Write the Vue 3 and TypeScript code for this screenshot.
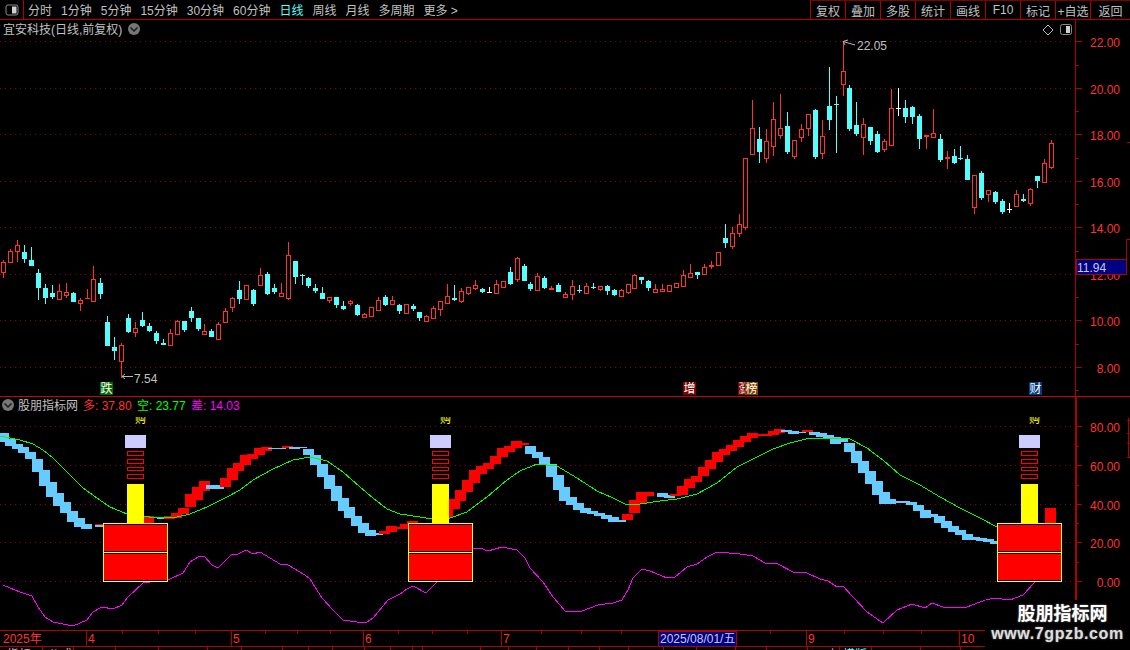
<script setup lang="ts">
type Candle = [string, number, number, number, number];
type BandRow = [number, number, number, string];

const periods = ['分时', '1分钟', '5分钟', '15分钟', '30分钟', '60分钟', '日线', '周线', '月线', '多周期', '更多 >'];
const actions = ['复权', '叠加', '多股', '统计', '画线', 'F10', '标记', '+自选', '返回'];

const raw: Candle[] = [
  ['r',262,272,260,278],['r',251,262,249,263],['r',245,251,240,262],['c',252,259,245,263],['c',260,266,247,266],
  ['c',273,288,269,300],['c',288,298,284,304],['c',293,297,285,299],['r',291,299,284,299],['r',292,295,283,298],
  ['c',293,302,292,302],['r',300,303,298,311],['f',298,299,289,299],['r',279,301,266,301],['c',283,294,278,299],
  ['c',322,346,316,346],['c',347,351,337,360],['r',345,361,343,378],['c',318,332,314,333],['r',328,332,322,337],
  ['c',320,326,312,327],['c',326,331,323,332],['c',333,341,331,344],['c',343,345,339,345],['r',333,345,329,345],
  ['r',321,334,320,334],['c',321,330,321,332],['c',311,318,307,322],['c',318,329,318,331],['r',331,334,324,335],
  ['c',331,337,329,337],['r',324,339,322,340],['r',311,322,308,323],['r',298,307,297,312],['c',290,299,281,304],
  ['r',285,299,285,299],['c',290,304,289,306],['r',275,285,268,285],['c',274,294,272,295],['c',288,292,284,294],
  ['r',293,296,283,297],['r',255,298,242,300],['c',261,277,261,284],['d',275,275,274,285],['c',278,286,277,288],
  ['c',288,291,284,293],['c',293,299,287,299],['r',297,300,297,303],['c',297,305,297,308],['c',306,309,301,310],
  ['r',301,303,300,306],['c',305,315,304,316],['r',314,317,313,317],['r',307,316,307,316],['r',300,310,297,311],
  ['c',297,305,295,306],['r',300,304,296,304],['c',305,311,304,314],['r',304,313,304,313],['c',306,309,304,311],
  ['c',312,318,312,321],['r',316,321,315,321],['r',308,318,306,318],['r',301,309,301,316],['r',296,303,284,304],
  ['d',298,300,285,301],['r',291,301,288,303],['r',287,293,287,295],['r',285,288,280,290],['c',289,292,288,293],
  ['w',292,293,287,293],['r',284,293,280,293],['r',281,287,281,288],['c',272,284,267,285],['r',258,279,257,282],
  ['c',266,281,264,281],['c',284,289,282,291],['r',276,290,273,291],['c',278,288,276,289],['f',288,290,286,290],
  ['c',285,292,283,292],['r',294,297,292,297],['r',286,294,280,300],['d',290,291,285,293],['r',286,293,283,294],
  ['d',287,288,283,289],['r',286,289,286,291],['c',286,291,285,295],['c',290,295,289,296],['r',290,296,289,296],
  ['r',284,292,284,294],['r',275,288,274,288],['c',277,280,277,284],['c',281,288,280,291],['r',289,292,284,292],
  ['r',289,291,284,291],['r',285,291,285,291],['r',283,287,283,287],['r',275,286,270,286],['r',273,277,264,277],
  ['c',272,275,272,279],['r',267,274,264,274],['f',265,267,261,269],['r',252,265,252,266],['c',238,243,224,248],
  ['r',233,246,227,249],['r',224,233,214,237],['r',158,227,158,230],['r',128,154,100,154],['c',139,152,127,163],
  ['r',141,158,129,163],['r',119,146,102,156],['r',128,135,94,139],['c',126,152,112,154],['r',140,156,140,159],
  ['r',129,137,124,142],['r',114,128,114,136],['c',110,157,109,159],['r',136,153,120,159],['c',106,120,67,130],
  ['d',104,105,96,153],['r',71,84,43,96],['c',88,129,85,131],['c',125,134,102,136],['r',124,137,118,155],
  ['c',127,141,127,145],['c',134,152,131,153],['r',141,149,139,152],['r',108,145,89,145],['w',108,109,88,116],
  ['c',108,117,100,123],['c',107,117,106,124],['c',116,139,114,149],['f',135,137,135,149],['r',133,137,109,137],
  ['c',139,160,134,162],['f',157,159,151,169],['c',156,163,149,164],['d',158,159,146,160],['c',159,180,155,180],
  ['r',175,207,175,214],['c',173,198,171,200],['r',190,194,190,202],['c',192,202,191,204],['c',201,212,199,214],
  ['w',209,210,203,213],['r',194,206,190,207],['c',199,201,194,202],['r',189,203,188,206],['c',176,181,176,188],
  ['r',163,182,159,182],['r',143,167,140,169],
];

function cx(i: number): number {
  return Math.round(3.3 + 6.936 * i);
}

const candles = raw.map((c, i) => {
  const [kind, top, bottom, high, low] = c;
  const x = cx(i);
  const tone = kind === 'c' || kind === 'd' ? 'cy' : kind === 'w' ? 'wh' : 'rd';
  return { i, kind, x, top, bottom, high, low, tone };
});

const seqs: [number, [number, number, string][]][] = [
  [-1, [[433,442,'b'],[439,446,'b'],[444,449,'b'],[447,453,'b'],[452,459,'b'],[459,472,'b'],[470,486,'b'],[482,497,'b'],[493,506,'b'],[502,513,'b'],[511,522,'b'],[518,527,'b'],[524,529,'b']]],
  [13, [[524,527,'r']]],
  [13, [[525,527,'b']]],
  [20, [[516,523,'r']]],
  [22, [[517,519,'b'],[516,519,'r'],[513,518,'r'],[508,514,'r'],[494,507,'r'],[487,500,'r'],[481,491,'r'],[485,489,'b'],[485,489,'b'],[478,487,'r'],[468,480,'r'],[463,471,'r'],[455,465,'r'],[454,459,'r'],[448,455,'r'],[447,451,'r'],[448,449,'b'],[448,449,'b'],[446,448,'r'],[447,449,'b'],[447,448,'b'],[449,455,'b'],[455,465,'b'],[464,477,'b'],[475,489,'b'],[486,501,'b'],[498,511,'b'],[507,518,'b'],[516,526,'b'],[523,533,'b'],[530,536,'b'],[533,535,'b'],[531,534,'r'],[526,532,'r'],[527,529,'r'],[524,529,'r'],[521,525,'r']]],
  [63, [[508,518,'r'],[499,509,'r'],[490,501,'r'],[480,492,'r'],[470,483,'r'],[466,474,'r'],[463,469,'r'],[456,464,'r'],[448,457,'r'],[446,452,'r'],[441,448,'r'],[443,445,'r'],[446,454,'b'],[452,458,'b'],[457,465,'b'],[464,477,'b'],[475,490,'b'],[487,501,'b'],[497,505,'b'],[503,510,'b'],[508,513,'b'],[511,514,'b'],[513,516,'b'],[515,519,'b'],[517,522,'b'],[520,522,'b'],[514,520,'r'],[500,513,'r'],[492,504,'r'],[492,496,'r']]],
  [94, [[493,497,'b'],[495,498,'b'],[494,496,'r'],[486,495,'r'],[479,488,'r'],[476,482,'r'],[467,476,'r'],[460,469,'r'],[452,462,'r'],[449,455,'r'],[445,451,'r'],[440,447,'r'],[436,442,'r'],[433,438,'r'],[434,436,'r'],[434,436,'r'],[431,435,'r'],[429,433,'r'],[430,432,'b'],[431,434,'b'],[432,433,'b'],[430,432,'r'],[432,435,'b'],[433,437,'b'],[435,438,'b'],[437,444,'b'],[439,442,'b'],[443,452,'b'],[451,463,'b'],[461,473,'b'],[471,484,'b'],[481,495,'b'],[492,504,'b'],[499,504,'b'],[501,503,'b'],[501,503,'b'],[502,505,'b'],[505,511,'b'],[510,518,'b'],[514,517,'b'],[516,523,'b'],[521,528,'b'],[526,532,'b'],[530,535,'b'],[534,540,'b'],[537,540,'b'],[538,541,'b'],[539,542,'b'],[541,544,'b']]],
  [150, [[508,523,'r']]],
];

const bands: BandRow[] = [];
seqs.forEach(([start, rows]) => {
  rows.forEach((r, k) => bands.push([Math.round(3.3 + 6.936 * (start + k) + 1.3), r[0], r[1], r[2]]));
});

const greenLine = '0,436 10,438 20,440 33,444 43,450 53,458 63,468 73,478 83,488 97,498 110,507 127,514 157,518 177,517 190,514 207,507 227,497 240,490 253,480 273,469 293,460 310,457 327,461 343,472 360,487 373,498 387,509 400,514 420,517 432,519 450,518 467,512 487,497 507,480 520,471 537,464 557,466 577,478 597,491 613,498 627,505 640,504 660,501 677,499 697,494 717,483 737,467 757,457 773,449 790,443 810,438 830,438 850,439 867,448 883,460 900,475 920,485 940,497 960,508 980,518 997,527';
const magentaLine = '3,585 10,588 20,592 32,596 38,607 45,617 53,622 63,624 73,626 87,620 93,612 102,607 113,609 122,605 128,597 143,583 170,579 183,573 190,562 198,557 204,556 212,565 218,568 232,554 238,554 246,550 253,554 260,552 270,558 280,564 288,565 305,575 310,579 322,598 333,610 343,620 357,622 367,622 373,618 388,600 400,594 407,589 413,586 426,593 436,583 473,548 480,548 488,551 502,547 517,550 525,558 530,568 543,582 553,597 566,612 582,611 598,605 613,603 622,600 628,590 633,578 642,569 650,571 667,578 675,577 687,567 697,564 707,557 717,552 740,554 753,556 765,563 778,564 793,572 807,573 820,579 828,581 837,587 843,586 853,597 867,612 883,623 897,610 912,604 925,608 932,603 943,607 967,607 980,602 993,598 1010,600 1023,595 1035,582';

const mainGrid = [
  { y: 41.5, label: '22.00' }, { y: 88.5, label: '20.00' }, { y: 134.5, label: '18.00' }, { y: 181.5, label: '16.00' },
  { y: 227.5, label: '14.00' }, { y: 274.5, label: '12.00' }, { y: 320.5, label: '10.00' }, { y: 367.5, label: '8.00' },
];
const subGrid = [
  { y: 426.5, label: '80.00' }, { y: 465.5, label: '60.00' }, { y: 504.5, label: '40.00' }, { y: 542.5, label: '20.00' }, { y: 581.5, label: '0.00' },
];
const minorTicks = [65, 111, 158, 204, 251, 297, 344, 390, 446, 485, 523, 562];
const signals = [0, 305, 894];
const ladder = [[451, 5], [459, 5], [467, 4], [474, 5]];
const dateMarks = [{ x: 86, t: '4' }, { x: 231, t: '5' }, { x: 363, t: '6' }, { x: 501, t: '7' }, { x: 806, t: '9' }, { x: 959, t: '10' }];
const dateTicks = [122, 158, 195, 265, 297, 330, 398, 432, 467, 541, 581, 621, 770, 844, 883, 921];
const lowerTicks = [42, 73, 115, 158, 207, 241, 282, 308, 332, 364, 390, 412, 422, 480, 508, 536, 568, 599, 628, 663, 696, 735, 766, 807, 839, 871, 920, 960];
const rightTicks = [142, 239, 420, 433, 443, 457];
</script>

<template>
  <div class="terminal">
    <header class="toolbar">
      <div class="panel-toggle">
        <svg width="14" height="12" viewBox="0 0 14 12"><rect x="1" y="1" width="12" height="10" rx="2" class="ico-line" /><rect x="7" y="2.5" width="4.5" height="7" class="ico-fill" /></svg>
      </div>
      <nav class="periods">
        <span v-for="p in periods" :key="p" :class="{ active: p === '日线' }">{{ p }}</span>
      </nav>
      <nav class="actions">
        <span v-for="a in actions" :key="a">{{ a }}</span>
      </nav>
    </header>

    <svg class="chart" width="1130" height="630" viewBox="0 20 1130 630" shape-rendering="crispEdges">
      <!-- grids -->
      <line v-for="g in mainGrid" :key="g.label" x1="0" x2="1075" :y1="g.y" :y2="g.y" class="dot" />
      <line v-for="g in subGrid" :key="g.label" x1="0" x2="1075" :y1="g.y" :y2="g.y" class="dot" />

      <!-- candles -->
      <g v-for="c in candles" :key="c.i">
        <rect :x="c.x" :y="c.high" width="1" :height="Math.max(1, c.low - c.high)" :class="c.tone" />
        <rect v-if="c.kind === 'r'" :x="c.x - 1.5" :y="c.top + 0.5" width="4" :height="c.bottom - c.top" class="hollow" />
        <rect v-else :x="c.x - 2" :y="c.top" width="5" :height="Math.max(1, c.bottom - c.top)" :class="c.tone" />
      </g>

      <!-- price annotations -->
      <g class="note" shape-rendering="auto">
        <path d="M122 376.5H133M122 376.5L125 374M122 376.5L125 379" />
        <path d="M843 41.5L855 45M843 41.5L848 40M843 41.5L845 45" />
      </g>
      <text x="134" y="383" class="t grey">7.54</text>
      <text x="857" y="50" class="t grey">22.05</text>

      <!-- event tags -->
      <rect x="100" y="382" width="13" height="13" class="tag-green" />
      <text x="100.5" y="393" class="t white">跌</text>
      <rect x="683" y="382" width="13" height="13" class="tag-red" />
      <text x="683.5" y="393" class="t white">增</text>
      <rect x="738" y="382" width="7" height="13" class="tag-red" />
      <rect x="745" y="382" width="13" height="13" class="tag-brown" />
      <text transform="translate(739 393) scale(0.5 1)" class="t white">涨</text>
      <text x="745.5" y="393" class="t white">榜</text>
      <rect x="1029" y="382" width="13" height="13" class="tag-blue" />
      <text x="1029.5" y="393" class="t white">财</text>

      <!-- panel heads -->
      <text x="3" y="34" class="t grey">宜安科技(日线,前复权)</text>
      <g shape-rendering="auto">
        <circle cx="134" cy="29" r="6" class="chip" /><path d="M130.5 27.5L134 31L137.5 27.5" class="chev" />
        <path d="M1048 25L1053 30L1048 35L1043 30Z" class="note" />
        <rect x="1060.5" y="24.5" width="11" height="10" rx="2" class="ico-line" /><rect x="1066" y="26" width="4" height="7" class="ico-fill" />
        <circle cx="8" cy="405" r="6" class="chip" /><path d="M4.5 403.5L8 407L11.5 403.5" class="chev" />
      </g>
      <text x="18" y="410" class="t grey">股朋指标网</text>
      <text x="83" y="410" class="t red">多: 37.80</text>
      <text x="137" y="410" class="t green">空: 23.77</text>
      <text x="191" y="410" class="t pink">差: 14.03</text>

      <!-- indicator -->
      <rect v-for="(b, k) in bands" :key="k" :x="b[0]" :y="b[1]" width="11" :height="b[2] - b[1]" :class="b[3] === 'r' ? 'band-r' : 'band-b'" />
      <polyline :points="greenLine" class="line-green" />
      <polyline :points="magentaLine" class="line-pink" />

      <g v-for="dx in signals" :key="dx" :transform="`translate(${dx} 0)`">
        <text x="135" y="423" class="t yellow buy" textLength="11" lengthAdjust="spacingAndGlyphs">购</text>
        <rect x="125" y="435" width="21" height="13" class="lav" />
        <rect v-for="l in ladder" :key="l[0]" x="127.5" :y="l[0] + 0.5" width="16" :height="l[1] - 1" class="rung" />
        <rect x="127" y="484" width="17" height="39" class="stem" />
        <rect x="103.5" y="523.5" width="64" height="58" class="block" />
        <line x1="104" x2="167" y1="524.5" y2="524.5" class="gap" />
        <line x1="104" x2="167" y1="551.5" y2="551.5" class="gap" />
        <line x1="104" x2="167" y1="553.5" y2="553.5" class="gap" />
        <line x1="104" x2="167" y1="580.5" y2="580.5" class="gap" />
        <line x1="104" x2="167" y1="552.5" y2="552.5" class="split" />
      </g>

      <!-- dividers and price axis -->
      <line x1="0" x2="1130" y1="396.5" y2="396.5" class="rule-b" />
      <line x1="1075.5" x2="1075.5" y1="20" y2="397" class="rule" />
      <rect x="1075" y="397" width="2" height="203" class="fill-rule" />
      <g v-for="g in mainGrid" :key="g.label">
        <line x1="1075" x2="1082" :y1="g.y" :y2="g.y" class="rule" />
        <text :x="1120" :y="g.y + 5" class="t red end">{{ g.label }}</text>
      </g>
      <g v-for="g in subGrid" :key="g.label">
        <line x1="1075" x2="1082" :y1="g.y" :y2="g.y" class="rule" />
        <text :x="1120" :y="g.y + 5" class="t red end">{{ g.label }}</text>
      </g>
      <line v-for="y in minorTicks" :key="y" x1="1075" x2="1079" :y1="y + 0.5" :y2="y + 0.5" class="rule" />
      <line x1="1128.5" x2="1128.5" y1="418" y2="457" class="rule" />
      <line x1="1126.5" x2="1126.5" y1="239" y2="275" class="rule" />
      <line v-for="y in rightTicks" :key="y" x1="1127" x2="1130" :y1="y + 0.5" :y2="y + 0.5" class="rule" />

      <!-- last price -->
      <rect x="1076.5" y="259.5" width="50" height="15" class="price-box" />
      <text x="1077" y="272" class="t pale">11.94</text>

      <!-- date strip -->
      <line x1="0" x2="1130" y1="630.5" y2="630.5" class="rule" />
      <line x1="0" x2="1130" y1="646.5" y2="646.5" class="rule" />
      <text x="3" y="643" class="t red">2025年</text>
      <g v-for="m in dateMarks" :key="m.t">
        <line :x1="m.x + 0.5" :x2="m.x + 0.5" y1="631" y2="646" class="rule" />
        <text :x="m.x + 2" y="643" class="t red">{{ m.t }}</text>
      </g>
      <line v-for="x in dateTicks" :key="x" :x1="x + 0.5" :x2="x + 0.5" y1="631" y2="634" class="rule" />
      <rect x="658.5" y="631.5" width="78" height="15" class="price-box" />
      <text x="660" y="643" class="t pale">2025/08/01/五</text>
      <line v-for="x in lowerTicks" :key="x" :x1="x + 0.5" :x2="x + 0.5" y1="647" y2="650" class="rule" />
      <text x="7" y="659" class="t grey">指标</text>
      <text x="48" y="659" class="t grey">公式</text>
      <text x="827" y="659" class="t grey">上</text>
      <text x="843" y="659" class="t cyan">模版</text>
    </svg>

    <aside class="watermark">
      <div class="wm-name">股朋指标网</div>
      <div class="wm-url">www.7gpzb.com</div>
    </aside>
  </div>
</template>

<style scoped>
.terminal {
  position: relative;
  width: 1130px;
  height: 650px;
  overflow: hidden;
  background: #000;
  font-family: "Liberation Sans", "Noto Sans CJK SC", sans-serif;
  font-size: 12px;
  color: #c0c0c0;
}
.toolbar {
  display: flex;
  align-items: stretch;
  height: 20px;
  box-sizing: border-box;
  border-bottom: 1px solid #b00000;
}
.panel-toggle {
  width: 24px;
  box-sizing: border-box;
  border-right: 1px solid #b00000;
  display: flex;
  align-items: center;
  justify-content: center;
}
.periods {
  display: flex;
  align-items: center;
  gap: 9px;
  padding-left: 4px;
  white-space: nowrap;
}
.periods .active { color: #54ffff; }
.actions {
  display: flex;
  margin-left: auto;
  width: 320px;
  border-top: 1px solid #800000;
  box-sizing: border-box;
}
.actions span {
  width: 35px;
  box-sizing: border-box;
  border-left: 1px solid #b00000;
  display: flex;
  align-items: center;
  justify-content: center;
  white-space: nowrap;
}
.actions span:last-child { flex: 1; }
.chart { display: block; }

.ico-line { fill: none; stroke: #8a8a8a; stroke-width: 1; }
.ico-fill { fill: #d0d0d0; }
.dot { stroke: #960000; stroke-width: 1; stroke-dasharray: 1 4; }
.rd { fill: #ff3232; }
.cy { fill: #54ffff; }
.wh { fill: #ffffff; }
.hollow { fill: #000; stroke: #ff3232; stroke-width: 1; }
.note { fill: none; stroke: #b8b8b8; stroke-width: 1; }
.t { font-family: "Liberation Sans", "Noto Sans CJK SC", sans-serif; font-size: 12px; }
.end { text-anchor: end; }
.grey { fill: #c0c0c0; }
.white { fill: #fff; }
.red { fill: #ff3232; }
.green { fill: #00ff00; }
.pink { fill: #ff00ff; }
.yellow { fill: #ffff00; }
.pale { fill: #c8c8e8; }
.cyan { fill: #54ffff; }
.buy { clip-path: inset(6px 0 0 0); }
.tag-green { fill: #006a00; }
.tag-red { fill: #800000; }
.tag-brown { fill: #804000; }
.tag-blue { fill: #003a80; }
.chip { fill: #777; }
.chev { fill: none; stroke: #1a1a1a; stroke-width: 1.5; }
.band-r { fill: #ff0000; }
.band-b { fill: #66ccff; }
.line-green { fill: none; stroke: #00ff00; stroke-width: 1; }
.line-pink { fill: none; stroke: #ff00ff; stroke-width: 1; }
.lav { fill: #ccccff; }
.rung { fill: #000; stroke: #ff0000; stroke-width: 1; }
.stem { fill: #ffff00; }
.block { fill: #ff0000; stroke: #ffff00; stroke-width: 1; }
.gap { stroke: #000; stroke-width: 1; }
.split { stroke: #ffff00; stroke-width: 1; }
.rule { stroke: #b00000; stroke-width: 1; }
.rule-b { stroke: #d00000; stroke-width: 1; }
.fill-rule { fill: #b00000; }
.price-box { fill: #000080; stroke: #b00000; stroke-width: 1; }

.watermark {
  position: absolute;
  left: 985px;
  top: 600px;
  width: 145px;
  height: 50px;
  background: #000;
  text-align: center;
  color: #fff;
}
.wm-name {
  margin-top: 2px;
  padding-left: 10px;
  font-size: 18px;
  line-height: 24px;
  font-weight: 700;
  text-shadow: 0 0 2px #888;
}
.wm-url {
  margin-top: -2px;
  font-family: "Liberation Sans", sans-serif;
  font-size: 16px;
  line-height: 20px;
  font-weight: 700;
  letter-spacing: 0.6px;
  color: #ddd;
  text-shadow: 0 0 2px #777;
}
</style>
